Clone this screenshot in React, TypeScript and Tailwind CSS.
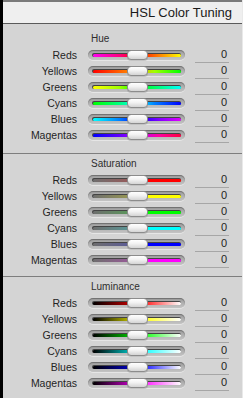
import React from 'react';

type Row = { name: string; bar: string };

const hue: Row[] = [
  { name: 'Reds', bar: 'bg-[linear-gradient(to_right,#ff00f0,#ff0080_30%,#ff0000_50%,#ff8000_75%,#ffff00)]' },
  { name: 'Yellows', bar: 'bg-[linear-gradient(to_right,#ff0000,#ff6000_30%,#ffa000_50%,#a0ff00_70%,#00ff00)]' },
  { name: 'Greens', bar: 'bg-[linear-gradient(to_right,#ffff00,#a0ff00_30%,#00ff00_50%,#00ff80_75%,#00ffff)]' },
  { name: 'Cyans', bar: 'bg-[linear-gradient(to_right,#00ff00,#00ff80_30%,#00ffff_50%,#0080ff_70%,#0000ff)]' },
  { name: 'Blues', bar: 'bg-[linear-gradient(to_right,#00ffff,#0080ff_30%,#0000ff_50%,#8000ff_75%,#e000ff)]' },
  { name: 'Magentas', bar: 'bg-[linear-gradient(to_right,#0000ff,#6000ff_30%,#b000ff_50%,#ff00a0_75%,#ff0040)]' },
];

const sat: Row[] = [
  { name: 'Reds', bar: 'bg-[linear-gradient(to_right,#6e6e6e,#9a5a5a_45%,#ff0000_55%,#ff0000)]' },
  { name: 'Yellows', bar: 'bg-[linear-gradient(to_right,#6e6e6e,#9a9a50_45%,#ffff00_55%,#ffff00)]' },
  { name: 'Greens', bar: 'bg-[linear-gradient(to_right,#6e6e6e,#5a9a5a_45%,#00ff00_55%,#00ff00)]' },
  { name: 'Cyans', bar: 'bg-[linear-gradient(to_right,#6e6e6e,#5a9a9a_45%,#00ffff_55%,#00ffff)]' },
  { name: 'Blues', bar: 'bg-[linear-gradient(to_right,#6e6e6e,#5a5a9a_45%,#0000ff_55%,#0000ff)]' },
  { name: 'Magentas', bar: 'bg-[linear-gradient(to_right,#6e6e6e,#9a5a9a_45%,#ff00ff_55%,#ff00ff)]' },
];

const lum: Row[] = [
  { name: 'Reds', bar: 'bg-[linear-gradient(to_right,#000000,#b00000_40%,#ff0000_50%,#ff4040_65%,#ffffff)]' },
  { name: 'Yellows', bar: 'bg-[linear-gradient(to_right,#000000,#b0b000_40%,#ffff00_50%,#ffff40_65%,#ffffff)]' },
  { name: 'Greens', bar: 'bg-[linear-gradient(to_right,#000000,#00b000_40%,#00ff00_50%,#40ff40_65%,#ffffff)]' },
  { name: 'Cyans', bar: 'bg-[linear-gradient(to_right,#000000,#00b0b0_40%,#00ffff_50%,#40ffff_65%,#ffffff)]' },
  { name: 'Blues', bar: 'bg-[linear-gradient(to_right,#000000,#0000b0_40%,#0000ff_50%,#4040ff_65%,#ffffff)]' },
  { name: 'Magentas', bar: 'bg-[linear-gradient(to_right,#000000,#b000b0_40%,#ff00ff_50%,#ff40ff_65%,#ffffff)]' },
];

function Slider({ bar }: { bar: string }) {
  return (
    <div className="relative h-[10px] w-[97px] rounded-full bg-[linear-gradient(#9c9c9c,#c4c4c4)] shadow-[inset_0_1px_1px_rgba(0,0,0,0.3),0_1px_0_#e6e6e6]">
      <div className="absolute left-[4px] right-[4px] top-[3px] h-[4px] rounded-full bg-[#444] p-[0.5px]">
        <div className={`h-full w-full rounded-full ${bar}`} />
      </div>
      <div className="absolute left-[39px] top-0 h-[10px] w-[21px] rounded-[4px] border border-[#8c8c8c] bg-[linear-gradient(#ffffff,#f2f2f2_45%,#d4d4d4)] shadow-[0_1px_0_rgba(0,0,0,0.15)]" />
    </div>
  );
}

function Section({ title, rows, first }: { title: string; rows: Row[]; first?: boolean }) {
  return (
    <div className={first ? 'pt-[7px] pb-[10px]' : 'pt-[2px] pb-[8px]'}>
      <div className="h-[16px] pl-[88px] text-[10px] leading-[16px] text-[#2e2e2e]">{title}</div>
      {rows.map((r) => (
        <div key={r.name} className="flex h-[16px] items-center">
          <div className="w-[74px] text-right text-[10.5px] leading-[16px] text-[#242424]">{r.name}</div>
          <div className="ml-[11px]">
            <Slider bar={r.bar} />
          </div>
          <div className="ml-[10px] flex h-[16px] w-[34px] items-center justify-end border-b border-[#a6a6a6] pr-[2px] text-[11px] leading-[15px] text-[#1e1e1e]">
            0
          </div>
        </div>
      ))}
    </div>
  );
}

export default function App() {
  return (
    <div className="flex h-[398px] w-[243px] overflow-hidden bg-black" style={{ fontFamily: '"Liberation Sans", Arial, sans-serif' }}>
      <div className="w-[3px] shrink-0 bg-black" />
      <div className="flex flex-1 flex-col border-r border-[#e9e9e9] bg-[#d4d4d4]">
        <div className="flex h-[24px] shrink-0 items-center justify-end border-t-2 border-b border-t-[#7a7a7a] border-b-[#5a5a5a] bg-[#efefef] pr-[10px] text-[13px] text-[#1a1a1a]">
          HSL Color Tuning
        </div>
        <Section title="Hue" rows={hue} first />
        <div className="h-px shrink-0 bg-[#7e7e7e]" />
        <Section title="Saturation" rows={sat} />
        <div className="h-px shrink-0 bg-[#7e7e7e]" />
        <Section title="Luminance" rows={lum} />
      </div>
    </div>
  );
}
